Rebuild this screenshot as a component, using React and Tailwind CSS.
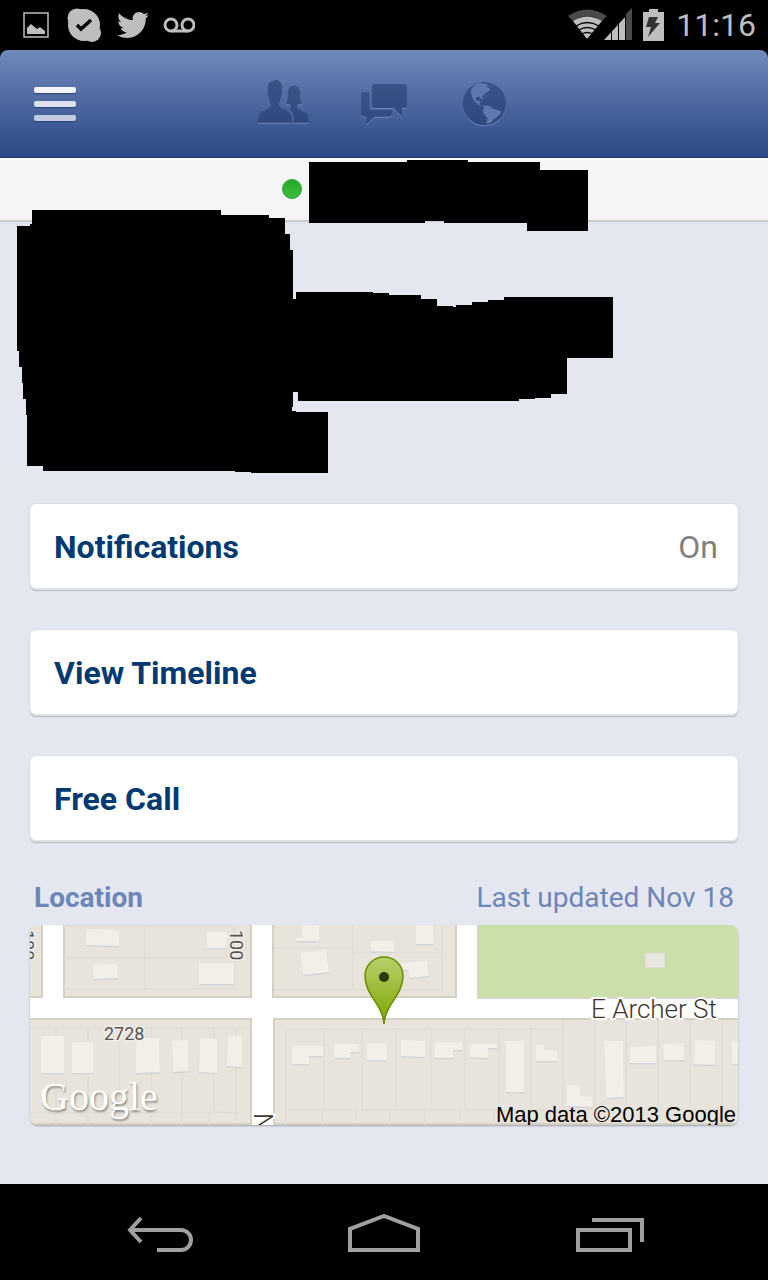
import { FaTwitter } from 'react-icons/fa';

const actions = [
  { id: 'notifications', label: 'Notifications', value: 'On' },
  { id: 'timeline', label: 'View Timeline' },
  { id: 'call', label: 'Free Call' }
];

const buildings = [
  '56,4 89,5 89,21 56,20',
  '63,40 87,39 88,53 63,54',
  '177,7 197,7 197,23 177,23',
  '169,38 204,38 204,59 169,59',
  '11,111 34,111 34,148 11,148',
  '42,117 63,117 63,148 42,148',
  '111,113 129,113 130,147 106,148 106,118',
  '142,116 158,115 158,146 143,147',
  '170,113 187,114 187,148 169,147',
  '198,111 212,111 212,142 197,141',
  '272,0 289,0 289,16 266,16 266,13 272,13',
  '270,28 296,25 299,47 273,50',
  '341,16 364,16 364,27 341,26',
  '386,0 403,0 404,19 386,19',
  '372,38 397,36 399,51 379,53 378,45 372,45',
  '262,121 293,121 293,131 279,131 279,139 262,139',
  '304,119 329,119 329,127 320,127 320,133 304,133',
  '337,118 357,118 357,135 337,135',
  '371,115 395,116 395,132 371,131',
  '405,117 432,117 432,125 423,125 423,133 405,133',
  '440,119 467,119 467,123 458,123 458,133 440,132',
  '476,116 494,116 494,167 476,167',
  '506,120 514,120 514,125 527,126 527,136 506,136',
  '537,160 551,161 550,171 562,172 562,182 537,181',
  '574,116 593,116 594,172 576,173',
  '600,122 626,121 626,138 600,138',
  '633,119 654,118 654,135 634,135',
  '665,115 685,116 685,140 664,139',
  '701,117 708,117 708,139 702,139'
];

const MenuIcon = () => (
  <span className="flex w-[42px] flex-col gap-2">
    <span className="h-1.5 rounded-xs bg-[#f4f5fa] shadow-[0_1px_1px_#2c4374]" />
    <span className="h-1.5 rounded-xs bg-[#dbe0ec] shadow-[0_1px_1px_#2c4374]" />
    <span className="h-1.5 rounded-xs bg-[#c3cbe1] shadow-[0_1px_1px_#2c4374]" />
  </span>
);

const FriendsIcon = () => (
  <svg viewBox="51 51 162 162" className="size-[54px] drop-shadow-[0_1px_0_#6f86b8]" fill="url(#engraved)">
    <path d="M54 188C54 172 56 162 63 157C72 150 87 147 91 140C93 135 92 130 89 125C85 119 86 112 83 106C82 100 83 96 84 92C82 78 84 69 93 64C99 60 106 62 112 59C115 63 119 61 118 66C126 70 128 79 126 91C128 96 127 103 124 108C123 115 122 121 119 126C117 131 117 137 119 140C125 147 139 150 147 156C154 162 156 171 156 188Z" />
    <path d="M138 130C144 122 143 108 144 97C145 84 151 77 162 77C173 77 179 84 180 97C181 109 181 122 186 130C182 133 176 134 173 134C171 138 171 143 175 147C183 152 195 155 201 161C206 166 207 176 207 188H161C161 175 160 162 153 155C150 151 146 148 147 147C153 144 153 138 152 134C146 134 141 133 138 130Z" />
  </svg>
);

const MessagesIcon = () => (
  <svg viewBox="351 51 162 162" className="size-[54px] drop-shadow-[0_1px_0_#6f86b8]" fill="url(#engraved)">
    <path d="M369 97H389V144Q389 151 397 151H456V163Q456 170 449 170H405L379 194V170H370Q363 170 363 163V104Q363 97 369 97Z" />
    <path d="M404 72H493Q501 72 501 80V136Q501 144 493 144H486V170L461 144H404Q396 144 396 136V80Q396 72 404 72Z" />
  </svg>
);

const GlobeIcon = () => (
  <svg viewBox="651 51 162 162" className="size-[54px] drop-shadow-[0_1px_0_#6f86b8]">
    <circle cx="733" cy="131" r="65" fill="url(#engraved)" />
    <path
      d="M694 87L702 78L711 72L722 69L729 72L733 69L738 72L744 75L740 82L748 84L749 91L743 96L736 99L731 104L727 110L729 121L724 117L718 110L710 111L707 117L711 124L718 121L721 126L718 131L723 137L731 137L738 136L748 138L757 144L764 148L773 150L783 153L782 160L775 167L770 172L762 177L757 183L750 189L743 191L739 188L742 181L743 174L736 167L730 158L729 150L733 142L725 139L715 134L708 128L701 122L696 109L693 98Z"
      fill="#5f78ae"
    />
  </svg>
);

const StatusBar = () => (
  <div className="flex h-[50px] items-center justify-between bg-black pl-[23px] pr-3 text-[#bebebe]">
    <div className="flex items-center">
      <svg viewBox="0 0 26 26" className="size-[26px]" fill="none" stroke="currentColor" strokeWidth="1.5">
        <path d="M1 1H25V25H1Z" />
        <path d="M4 22V16L8 12L14 17L17 15L22 19V22Z" fill="currentColor" stroke="none" />
      </svg>
      <svg viewBox="0 0 34 34" className="ml-[18px] size-[34px]">
        <g fill="currentColor">
          <circle cx="17" cy="17" r="16" />
          <circle cx="10" cy="10" r="9.500" />
          <circle cx="25" cy="25" r="9" />
        </g>
        <path d="M10 17L14 21L24 12" fill="none" stroke="#000" strokeWidth="3.500" />
      </svg>
      <FaTwitter className="ml-4 size-8" />
      <svg viewBox="0 0 32 16" className="ml-3.5 h-4 w-8" fill="none" stroke="currentColor" strokeWidth="3">
        <circle cx="8" cy="8" r="6" />
        <circle cx="25" cy="8" r="6" />
        <path d="M8 14H25" />
      </svg>
    </div>
    <div className="flex items-center">
      <svg viewBox="0 0 64 34" className="h-[34px] w-16">
        <path d="M0 8Q19 -5 39 8L34 13Q19 3 5 13Z" fill="#4a4a4a" />
        <path d="M19 31L5 13Q19 4 34 13Z" fill="currentColor" />
        <path d="M8 18Q19 11 31 18M11 22Q19 17 28 22M14 26Q19 23 25 26" fill="none" stroke="#000" strokeWidth="1.300" />
        <path d="M58 6L64 0V32H58Z" fill="#4a4a4a" />
        <path d="M36 32L58 8V32Z" fill="currentColor" />
        <path d="M43.500 22V32M50.500 14V32M57.500 8V32" stroke="#000" strokeWidth="1" />
      </svg>
      <svg viewBox="0 0 21 32" className="ml-[11px] h-8 w-[21px]">
        <path d="M0 3H6V0H15V3H21V32H0Z" fill="currentColor" />
        <path d="M6 8H15L12 14H17L5 28L8 18H3Z" fill="#333" />
      </svg>
      <time className="ml-3 text-[32px] leading-10">11:16</time>
    </div>
  </div>
);

const TopBar = () => (
  <div className="bg-black">
    <header className="grid h-[108px] grid-cols-[1fr_auto_1fr] items-center rounded-t-lg border-b border-[#203a72] bg-linear-to-b from-[#7189ba] to-[#2b4886]">
      <svg className="absolute size-0" aria-hidden="true">
        <linearGradient id="engraved" x2="0" y2="1">
          <stop stopColor="#3a5488" />
          <stop offset="1" stopColor="#2f497f" />
        </linearGradient>
      </svg>
      <button type="button" aria-label="Menu" className="justify-self-start px-[34px] py-8">
        <MenuIcon />
      </button>
      <nav className="flex">
        <button type="button" aria-label="Friend requests" className="flex w-[100px] justify-center">
          <FriendsIcon />
        </button>
        <button type="button" aria-label="Messages" className="flex w-[100px] justify-center">
          <MessagesIcon />
        </button>
        <button type="button" aria-label="Notifications" className="flex w-[100px] justify-center">
          <GlobeIcon />
        </button>
      </nav>
    </header>
  </div>
);

const ActionButton = ({ label, value }) => (
  <button
    type="button"
    className="flex h-[84px] w-full items-center justify-between rounded-md bg-white pl-6 pr-5 pt-0.5 text-[32px] leading-10 shadow-[0_2px_0_#e1e2e5,0_3px_1px_#b3b6bd,0_0_2px_#c5c8d0]"
  >
    <span className="font-bold text-[#003a70]">{label}</span>
    {value && <span className="text-[#808080]">{value}</span>}
  </button>
);

const LocationMap = () => (
  <div className="relative h-[200px] overflow-hidden rounded-lg bg-white shadow-[0_1px_2px_#9da0a8]">
    <svg viewBox="0 0 708 200" preserveAspectRatio="xMidYMid slice" className="size-full">
      <linearGradient id="pin" x2="0" y2="1">
        <stop stopColor="#b8d06c" />
        <stop offset="1" stopColor="#7da600" />
      </linearGradient>

      {/* city blocks */}
      <g fill="#e8e4dc" stroke="#d5d0c4" strokeWidth="2">
        <path d="M-2 -2H12V72H-2ZM34 -2H221V72H34ZM243 -2H426V72H243ZM-2 94H221V199H-2ZM244 94H710V199H244Z" />
      </g>
      <path d="M448 -2H710V73H448Z" fill="#cbdfab" stroke="#d8d3c6" strokeWidth="2" />
      <path d="M615 28H635V43H615Z" fill="#e7e6df" stroke="#dcd5ca" />

      {/* lots */}
      <path
        d="M34 1H204V64H34M115 0V64M34 33H204M244 23H323M323 0V65M323 28H412M412 0V65H244M0 103H221M26 103V200M58 103V200M89 103V200M121 103V200M152 103V200M184 103V187L206 188M206 103V200M0 188H184M179 188V200M256 200V104H533M294 104V184M332 104V184M366 104V184M401 104V184M435 104V184M469 104V184M501 104V184M533 95V184M565 95V184M596 95V184M628 95V184M660 95V184M692 95V184M257 185H708M292 185V200M326 185V200M360 185V200M395 185V200M430 185V200M464 185V200"
        fill="none"
        stroke="#dfdbd6"
        strokeWidth="1.5"
      />
      {buildings.map((points) => (
        <g key={points}>
          <polygon points={points} fill="#d3d5d9" transform="translate(0 1.500)" />
          <polygon points={points} fill="#f2efe9" />
        </g>
      ))}

      <g fill="#555" fontSize="18" stroke="#f1eee8" strokeWidth="3" paintOrder="stroke">
        <text x="74" y="115">2728</text>
        <text transform="translate(200 5) rotate(90)">100</text>
        <text transform="translate(-9 5) rotate(90)">100</text>
      </g>
      <g fill="#40362d" fontSize="26" fontWeight="300" stroke="#fff" strokeWidth="4" paintOrder="stroke">
        <text x="561" y="93">E Archer St</text>
        <text transform="translate(224 188) rotate(90)">N</text>
      </g>

      <path
        d="M354 99C353 80 335 70 335 51A19 19 0 0 1 373 51C373 70 355 80 354 99Z"
        fill="url(#pin)"
        stroke="#6a8c00"
        strokeWidth="1.5"
      />
      <circle cx="354" cy="52" r="5" fill="#2b3a00" />
    </svg>
    <span className="absolute bottom-1 left-2.5 font-['Liberation_Serif',serif] text-[40px] leading-12 text-white [text-shadow:1px_2px_2px_#8d8a84]">
      Google
    </span>
    <span className="absolute bottom-0 right-0.5 font-['Liberation_Sans',sans-serif] text-[22px] leading-5 text-black">
      Map data ©2013 Google
    </span>
  </div>
);

const NavigationBar = () => (
  <nav className="flex h-24 items-center justify-center gap-[152px] bg-black pt-1 text-[#a0a0a0]">
    <button type="button" aria-label="Back">
      <svg viewBox="0 0 72 40" className="h-10 w-[72px]" fill="none" stroke="currentColor" strokeWidth="4">
        <path d="M5 16H57A10 10 0 0 1 57 36H33" />
        <path d="M17 4L6 16L17 28" />
      </svg>
    </button>
    <button type="button" aria-label="Home">
      <svg viewBox="0 0 72 40" className="h-10 w-[72px]" fill="none" stroke="currentColor" strokeWidth="4">
        <path d="M2 36V15L36 2L70 15V36Z" />
      </svg>
    </button>
    <button type="button" aria-label="Recent apps">
      <svg viewBox="0 0 72 40" className="h-10 w-[72px]" fill="none" stroke="currentColor" strokeWidth="4">
        <path d="M6 16H58V36H6Z" />
        <path d="M20 6H70V28" />
      </svg>
    </button>
  </nav>
);

const App = () => (
  <div className="flex min-h-screen flex-col bg-[#e4e7ef] font-[Roboto,sans-serif]">
    <StatusBar />
    <TopBar />

    <div className="flex h-16 items-start justify-center gap-[7px] border-b-2 border-t-2 border-b-[#cbcbcd] border-t-white bg-[#f5f5f8] pl-[102px]">
      <span className="mt-[19px] size-5 rounded-full border border-[#2a9f2d] bg-linear-to-b from-[#23a823] to-[#3dbd3d]" />
      <svg viewBox="0 0 279 71" className="h-[71px] w-[279px] shrink-0">
        <path d="M0 2H98V0H159V2H231V10H279V71H218V63H135V61H116V63H0Z" />
      </svg>
    </div>

    <main className="flex-1 px-[30px] pb-14">
      <svg viewBox="0 0 596 263" className="-ml-[13px] -mt-3 h-[263px] w-[596px]">
        <path d="M15 0H204V5H252V8H268V24H273V40H276V89H279V82H356V83H372V85H404V89H420V96H436V97H439V95H455V92H471V90H487V87H596V148H550V184H534V188H518V189H502V191H281V182H276V197H275V201H279V202H311V263H234V262H218V261H26V256H10V205H9V189H6V173H5V157H2V141H0V16H13V14H15Z" />
      </svg>

      <div className="mt-[31px] flex flex-col gap-[42px]">
        {actions.map((action) => (
          <ActionButton key={action.id} label={action.label} value={action.value} />
        ))}
      </div>

      <section>
        <div className="mb-[9px] mt-10 flex justify-between px-1 text-[28px] leading-9 text-[#6d86b9]">
          <h2 className="font-bold">Location</h2>
          <p>Last updated Nov 18</p>
        </div>
        <LocationMap />
      </section>
    </main>

    <NavigationBar />
  </div>
);

export default App;
